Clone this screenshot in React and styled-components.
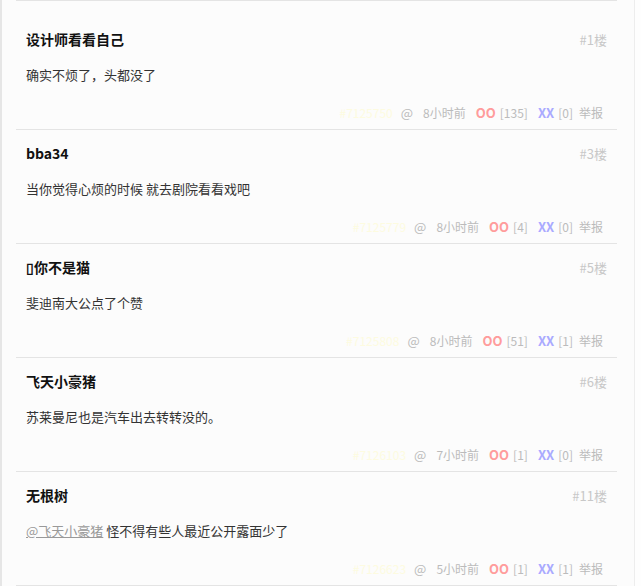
import React from 'react';
import styled, { createGlobalStyle } from 'styled-components';

const comments = [
  { id: '7125750', name: '设计师看看自己', floor: 1, text: '确实不烦了，头都没了', time: '8小时前', oo: 135, xx: 0 },
  { id: '7125779', name: 'bba34', floor: 3, text: '当你觉得心烦的时候 就去剧院看看戏吧', time: '8小时前', oo: 4, xx: 0 },
  { id: '7125808', name: '\u25AF你不是猫', floor: 5, text: '斐迪南大公点了个赞', time: '8小时前', oo: 51, xx: 1 },
  { id: '7126103', name: '飞天小豪猪', floor: 6, text: '苏莱曼尼也是汽车出去转转没的。', time: '7小时前', oo: 1, xx: 0 },
  { id: '7126623', name: '无根树', floor: 11, mention: '@飞天小豪猪', text: ' 怪不得有些人最近公开露面少了', time: '5小时前', oo: 1, xx: 1 },
];

const App = () => {
  return (
    <Page>
      <GlobalStyle />
      <List>
        {comments.map(c => (
          <Item key={c.id}>
            <Head>
              <Author>{c.name}</Author>
              <Floor>#{c.floor}楼</Floor>
            </Head>
            <Body>
              {c.mention && <Mention href="#">{c.mention}</Mention>}
              {c.text}
            </Body>
            <Footer>
              <PostId>#{c.id}</PostId>
              <At>@</At>
              <Meta>{c.time}</Meta>
              <Vote>
                <VoteLabel color="#ff9c9c">OO</VoteLabel>
                <Meta>[{c.oo}]</Meta>
              </Vote>
              <Vote>
                <VoteLabel color="#aaaaff">XX</VoteLabel>
                <Meta>[{c.xx}]</Meta>
              </Vote>
              <Report>举报</Report>
            </Footer>
          </Item>
        ))}
      </List>
    </Page>
  );
};

const GlobalStyle = createGlobalStyle`
  html, body {
    margin: 0;
    padding: 0;
    background: #fefefe;
  }
  body {
    font-family: "Noto Sans CJK SC", "Liberation Sans", sans-serif;
  }
`;

const Page = styled.div`
  width: 635px;
  height: 586px;
  overflow: hidden;
  background: #fcfcfc;
  border-left: 2px solid #e6e6e6;
  border-right: 1px solid #ededed;
  box-sizing: border-box;
`;

const List = styled.ul`
  list-style: none;
  margin: 0 0 0 14px;
  padding: 15px 0 0;
  width: 601px;
  border-top: 1px solid #e4e4e4;
`;

const Item = styled.li`
  height: 113px;
  border-bottom: 1px solid #e4e4e4;
  padding: 0 10px;
  display: flex;
  flex-direction: column;
`;

const Head = styled.div`
  display: flex;
  justify-content: space-between;
  align-items: center;
  height: 20px;
  margin-top: 13px;
`;

const Author = styled.strong`
  font-size: 14px;
  color: #111;
  font-weight: bold;
`;

const Floor = styled.span`
  font-size: 13px;
  color: #c8c8c8;
`;

const Body = styled.p`
  margin: 16px 0 0;
  font-size: 13px;
  line-height: 20px;
  color: #333;
`;

const Mention = styled.a`
  color: #999;
  text-decoration: underline;
`;

const Footer = styled.div`
  display: flex;
  justify-content: flex-end;
  align-items: center;
  gap: 10px;
  height: 20px;
  margin-top: auto;
  margin-bottom: 7px;
  padding-right: 4px;
  font-size: 12px;
`;

const PostId = styled.span`
  color: #fdfbe0;
  margin-right: -2px;
`;

const Meta = styled.span`
  color: #bbbbbb;
`;

const At = styled(Meta)`
  font-size: 13px;
`;

const Report = styled(Meta)`
  margin-left: -4px;
`;

const Vote = styled.span`
  display: flex;
  align-items: center;
  gap: 4px;
`;

const VoteLabel = styled.b`
  color: ${({ color }) => color};
  font-size: 13px;
  font-weight: bold;
`;

export default App;
